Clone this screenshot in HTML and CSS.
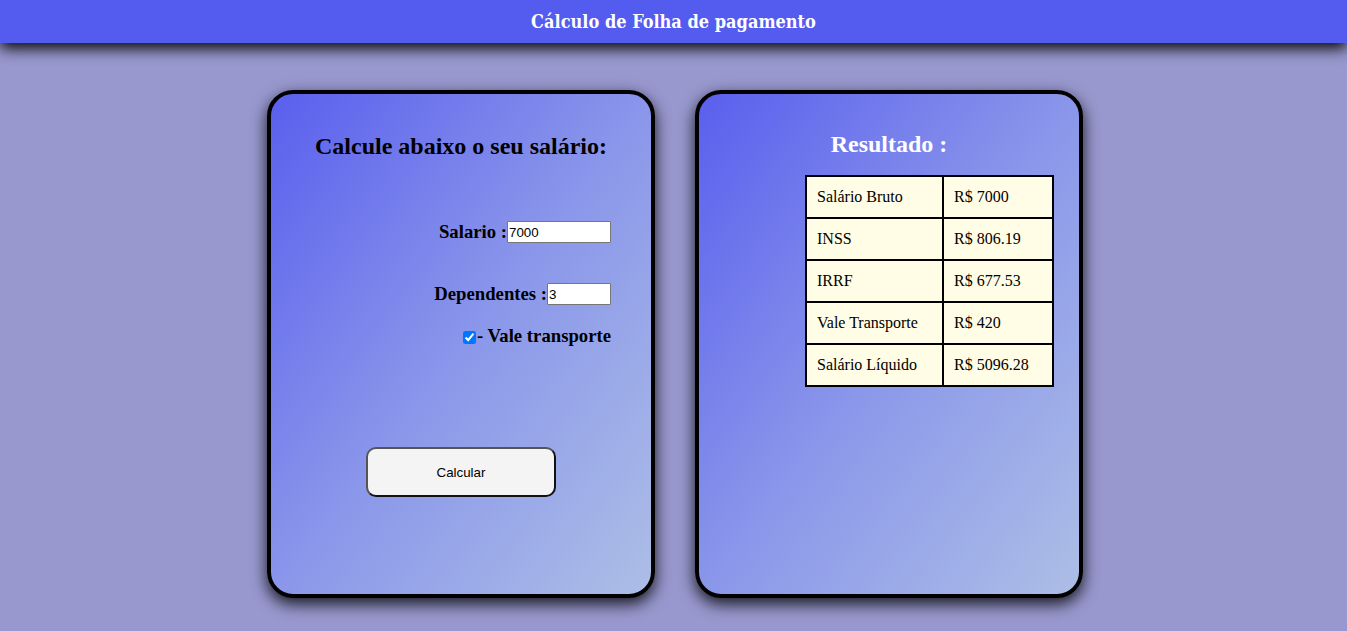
FILE: index.html
```html
<!DOCTYPE html>
<html lang="pt-BR">
<head>
<meta charset="utf-8">
<title>Cálculo de Folha de pagamento</title>
<link rel="stylesheet" href="styles.css">
</head>
<body>
<header class="topbar">
  <h1 class="topbar-title">Cálculo de Folha de pagamento</h1>
</header>
<main class="main">
  <section class="card card-form">
    <h2 class="card-title">Calcule abaixo o seu salário:</h2>
    <div class="field field-salario">
      <label class="field-label" for="salario">Salario :</label><input class="field-input input-salario" id="salario" type="text" value="7000">
    </div>
    <div class="field field-dep">
      <label class="field-label" for="dep">Dependentes :</label><input class="field-input input-dep" id="dep" type="text" value="3">
    </div>
    <div class="field field-check">
      <input class="check" id="vt" type="checkbox" checked><label class="field-label" for="vt">- Vale transporte</label>
    </div>
    <button class="btn" type="button">Calcular</button>
  </section>
  <section class="card card-result">
    <h2 class="card-title result-title">Resultado :</h2>
    <table class="result-table">
      <tr><td class="c1">Salário Bruto</td><td class="c2">R$ 7000</td></tr>
      <tr><td class="c1">INSS</td><td class="c2">R$ 806.19</td></tr>
      <tr><td class="c1">IRRF</td><td class="c2">R$ 677.53</td></tr>
      <tr><td class="c1">Vale Transporte</td><td class="c2">R$ 420</td></tr>
      <tr><td class="c1">Salário Líquido</td><td class="c2">R$ 5096.28</td></tr>
    </table>
  </section>
</main>
</body>
</html>
```

FILE: styles.css
```css
* { box-sizing: border-box; }
html, body { margin: 0; padding: 0; }
body {
  background: #9898cf;
  font-family: "Liberation Serif", "Times New Roman", serif;
  min-height: 631px;
  overflow: hidden;
}
.topbar {
  height: 43px;
  background: #545bef;
  box-shadow: 0 5px 15px #000;
  display: flex;
  align-items: center;
  justify-content: center;
  position: relative;
  z-index: 1;
}
.topbar-title {
  margin: 0;
  color: #fff;
  font-family: "DejaVu Serif Condensed", "DejaVu Serif", serif;
  font-stretch: condensed;
  font-weight: bold;
  font-size: 18px;
  line-height: 1;
}
.main {
  display: flex;
  justify-content: center;
  gap: 40px;
  padding-top: 47px;
  padding-left: 3px;
}
.card {
  width: 388px;
  height: 508px;
  border: 4px solid #000;
  border-radius: 26px;
  background: linear-gradient(to bottom right, #5a5fee 0%, #8a96ea 50%, #acbee6 100%);
  box-shadow: 0 6px 16px rgba(0,0,0,0.85);
  display: flex;
  flex-direction: column;
}
.card-form {
  padding: 20px 40px 0 0;
  align-items: flex-end;
}
.card-title {
  font-size: 24px;
  font-weight: bold;
  margin: 19px 0 0;
  line-height: 27px;
  align-self: center;
}
.card-form .card-title { margin-left: 40px; }
.field {
  display: flex;
  align-items: center;
}
.field-label {
  font-size: 18.72px;
  font-weight: bold;
  color: #000;
}
.field-salario { margin-top: 61px; }
.field-dep { margin-top: 40px; }
.field-check { margin-top: 20px; }
.field-input {
  height: 22px;
  border: 1px solid #767676;
  border-radius: 1px;
  padding: 0 1px;
  font-family: "Liberation Sans", Arial, sans-serif;
  font-size: 13.33px;
  background: #fff;
  margin: 0;
}
.input-salario { width: 104px; }
.input-dep { width: 64px; }
.check {
  width: 13px;
  height: 13px;
  margin: 2px 1px 0 0;
  accent-color: #0075ff;
}
.btn {
  align-self: center;
  margin: 100px 0 0 40px;
  width: 190px;
  height: 50px;
  border-radius: 10px;
  border: 2px solid;
  border-color: #555 #111 #111 #555;
  background: #f4f4f4;
  font-family: "Liberation Sans", Arial, sans-serif;
  font-size: 13.33px;
  color: #000;
}
.card-result {
  padding-top: 18px;
  align-items: center;
}
.result-title {
  color: #fff;
  margin: 19px 0 0;
}
.result-table {
  align-self: flex-end;
  margin: 17px 25px 0 0;
  border-collapse: collapse;
  background: #fffde6;
  border: 2px solid #000;
  font-size: 16px;
}
.result-table td {
  border: 2px solid #000;
  padding: 11px 10px;
  line-height: 18px;
  white-space: nowrap;
}
.result-table .c1 { width: 137px; }
.result-table .c2 { width: 110px; }
```
